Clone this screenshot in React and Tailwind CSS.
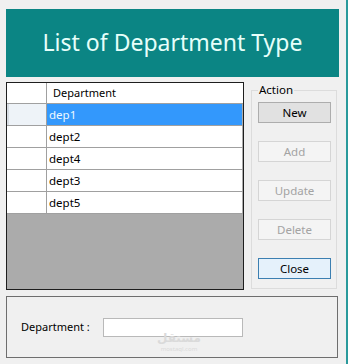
import React from 'react';

const rows = ['dep1', 'dept2', 'dept4', 'dept3', 'dept5'];

function Btn({ children, disabled, focused }) {
  let cls = 'border-[#adadad] bg-[#e1e1e1] text-black';
  if (disabled) cls = 'border-[#d5d5d5] bg-[#f4f4f4] text-[#a3a3a3]';
  if (focused) cls = 'border-[#3c7fb1] bg-[#e5f1fb] text-black';
  return (
    <button className={`w-[73px] h-[21px] border text-[11.5px] leading-none flex items-center justify-center ${cls}`}>
      {children}
    </button>
  );
}

export default function App() {
  return (
    <div
      className="w-[348px] h-[364px] bg-[#f0f0f0] pt-[9px] pl-[6px] border-r-2 border-[#2a9a9c] overflow-hidden"
      style={{ fontFamily: '"Noto Sans", "DejaVu Sans", sans-serif' }}
    >
      {/* title bar */}
      <div className="w-[333px] h-[68px] bg-[#0b8584] flex items-center justify-center text-[#e6fffa] text-[23px] pb-[2px]">
        List of Department Type
      </div>

      <div className="flex mt-[5px]">
        {/* grid */}
        <div className="w-[238px] h-[208px] border border-[#1e1e1e] bg-[#ababab] flex flex-col">
          <div className="flex h-[21px] bg-white border-b border-[#a0a0a0]">
            <div className="w-[40px] border-r border-[#a0a0a0]" />
            <div className="flex-1 pl-[6px] text-[11px] flex items-center text-black">Department</div>
          </div>
          {rows.map((r, i) => (
            <div key={r} className="flex h-[22px] border-b border-[#a0a0a0]">
              <div className={`w-[40px] border-r border-[#a0a0a0] ${i === 0 ? 'bg-[#eef3f8] border-l-2 border-l-[#d8dde3]' : 'bg-white'}`} />
              <div
                className={`flex-1 pl-[2px] text-[11.5px] flex items-center mr-[1px] ${i === 0 ? 'bg-[#3398fc] text-[#eef8ff]' : 'bg-white text-black'}`}
              >
                {r}
              </div>
            </div>
          ))}
        </div>

        {/* action group */}
        <fieldset className="ml-[7px] mt-[1px] w-[86px] h-[206px] border border-[#dcdcdc] pl-[6px] pt-[5px]">
          <legend className="px-[1px] text-[11.5px] leading-[14px] text-black">Action</legend>
          <div className="flex flex-col gap-[18px]">
            <Btn>New</Btn>
            <Btn disabled>Add</Btn>
            <Btn disabled>Update</Btn>
            <Btn disabled>Delete</Btn>
            <Btn focused>Close</Btn>
          </div>
        </fieldset>
      </div>

      {/* bottom panel */}
      <div className="relative mt-[6px] w-[332px] h-[62px] border border-[#6e6e6e] flex items-center pl-[14px]">
        <span className="text-[11px] text-black w-[82px]">Department :</span>
        <div className="w-[140px] h-[19px] bg-white border border-[#b9b9b9]" />
        <div className="absolute left-[150px] top-[35px] flex flex-col items-center gap-[2px] text-[#dadada]">
          <span className="text-[12px] leading-[12px] font-bold">مستقل</span>
          <span className="text-[6px] leading-[6px]">mostaql.com</span>
        </div>
      </div>
    </div>
  );
}
